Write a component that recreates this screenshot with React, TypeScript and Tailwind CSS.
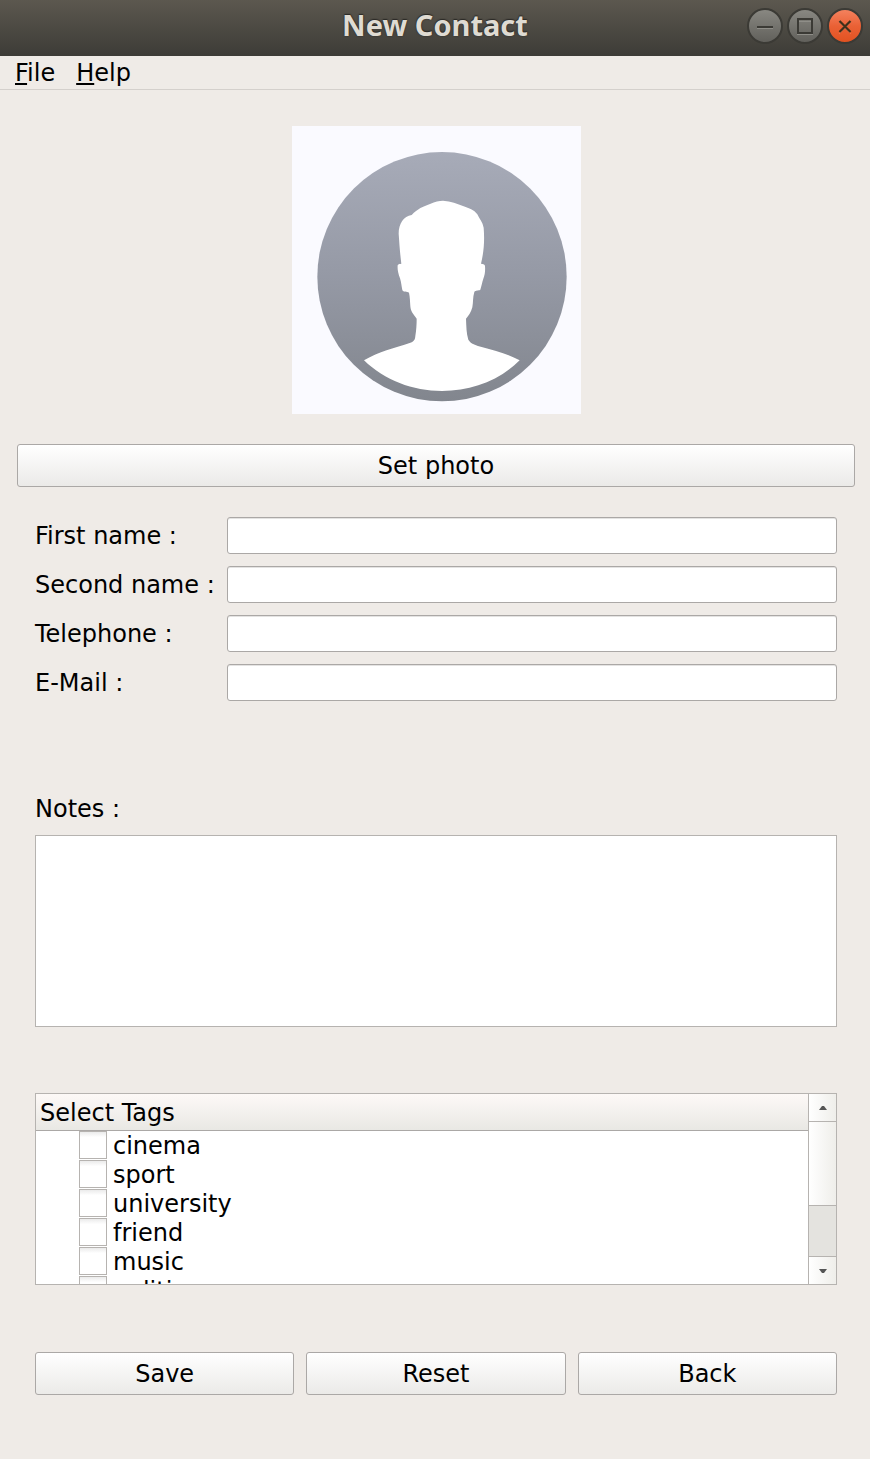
import type { ReactNode } from 'react';

const fields = [
  { id: 'first-name', label: 'First name :', type: 'text' },
  { id: 'second-name', label: 'Second name :', type: 'text' },
  { id: 'telephone', label: 'Telephone :', type: 'tel' },
  { id: 'email', label: 'E-Mail :', type: 'email' },
];

const tags = ['cinema', 'sport', 'university', 'friend', 'music', 'politics'];

function PushButton({ children }: { children: ReactNode }) {
  return (
    <button
      type="button"
      className="h-[43px] w-full rounded-[3px] border border-[#aba8a6] bg-linear-to-b from-white to-[#ebeae8] text-center"
    >
      {children}
    </button>
  );
}

function WindowButton({ label, close, children }: { label: string; close?: boolean; children: ReactNode }) {
  return (
    <button
      type="button"
      aria-label={label}
      className={
        close
          ? 'size-9 rounded-full border-2 border-[#3b3a35] bg-linear-to-b from-[#f58562] via-[#ea6135] to-[#e0501d] bg-origin-border'
          : 'size-9 rounded-full border-2 border-[#3b3a35] bg-linear-to-b from-[#8b8a84] to-[#5f5e59] bg-origin-border'
      }
    >
      <svg viewBox="0 0 32 32" className="size-8" fill="none" strokeWidth="2">
        {children}
      </svg>
    </button>
  );
}

function TitleBar() {
  return (
    <header className="grid h-14 grid-cols-[1fr_auto_1fr] items-center bg-linear-to-b from-[#5c584f] to-[#3d3c37] px-[7px] pb-1">
      <span />
      <h1 className="pb-[2px] font-['Noto_Sans',sans-serif] text-[29px] leading-8 font-bold text-[#dfdbd2] [text-shadow:0_0_2px_#2b2a27,0_-1px_1px_#2b2a27]">
        New Contact
      </h1>
      <div className="flex justify-end gap-1">
        <WindowButton label="Minimize">
          <path d="M8 18.5h16" stroke="#8f8e88" strokeWidth="1" />
          <path d="M8 17h16" stroke="#3b3a35" />
        </WindowButton>
        <WindowButton label="Maximize">
          <path d="M8 24.5h16M10 11.5h12" stroke="#8f8e88" strokeWidth="1" />
          <path d="M9 9h14v14H9z" stroke="#3b3a35" />
        </WindowButton>
        <WindowButton label="Close" close>
          <path d="M10.500 12.500l11 11M21.500 12.500l-11 11" stroke="#f58a66" strokeWidth="1" />
          <path d="M10.500 11l11 11M21.500 11l-11 11" stroke="#40301a" strokeWidth="2.300" />
        </WindowButton>
      </div>
    </header>
  );
}

function Avatar() {
  return (
    <svg viewBox="33 33 867 864" className="h-[288px] w-[289px]" role="img" aria-label="Contact photo">
      <defs>
        <linearGradient id="disc" x1="0" y1="0" x2="0" y2="1">
          <stop offset="0" stopColor="#a7abb8" />
          <stop offset="0.5" stopColor="#9599a5" />
          <stop offset="1" stopColor="#82868e" />
        </linearGradient>
      </defs>
      <rect x="33" y="33" width="867" height="864" fill="#fafaff" />
      <circle cx="483" cy="485" r="374" fill="url(#disc)" />
      <path
        fill="#fff"
        d="M249 736C296 709 337 700 386 684C398 680 402 676 403 663C406 645 407 628 407 611C397 597 389 590 388 574C387 560 387 547 384 533C379 529 366 532 364 525C361 512 361 502 357 490C351 474 349 463 350 451C352 446 357 447 361 446C357 416 355 384 353 356C353 326 368 304 392 300C410 281 426 275 447 267C463 260 474 257 486 257C510 259 529 266 548 274C564 280 579 284 589 298C595 311 605 322 608 338C611 375 609 409 600 446C606 447 610 446 612 452C613 468 612 479 607 491C603 502 602 512 598 524C592 528 584 524 580 531C575 547 577 561 574 577C570 593 563 601 555 611C556 633 556 655 562 674C570 688 588 691 602 696C642 707 678 716 716 736C655 797 572 828 483 828C395 828 311 796 249 736Z"
      />
    </svg>
  );
}

function ScrollBar() {
  return (
    <div className="flex w-7 shrink-0 flex-col border-l border-[#b6b3b0]">
      <button
        type="button"
        aria-label="Scroll up"
        className="flex h-7 items-center justify-center border-b border-[#b6b3b0] bg-linear-to-r from-white to-[#efeeea]"
      >
        <svg viewBox="0 0 8 4" className="h-1 w-2" fill="#555">
          <path d="M0 4L3 0h2l3 4z" />
        </svg>
      </button>
      <div className="flex grow flex-col bg-[#e4e3df]">
        <div className="h-[84px] border-b border-[#b6b3b0] bg-linear-to-r from-white to-[#efeeea]" />
      </div>
      <button
        type="button"
        aria-label="Scroll down"
        className="flex h-7 items-center justify-center border-t border-[#b6b3b0] bg-linear-to-r from-white to-[#efeeea]"
      >
        <svg viewBox="0 0 8 4" className="h-1 w-2" fill="#555">
          <path d="M0 0L3 4h2l3-4z" />
        </svg>
      </button>
    </div>
  );
}

function TagTree() {
  return (
    <div className="mt-[66px] flex h-48 border border-[#b6b3b0] bg-white">
      <div className="flex min-w-0 grow flex-col">
        <h2 className="h-[37px] shrink-0 border-b border-[#aba8a6] bg-linear-to-b from-[#fdf9f7] to-[#e9e8e4] pl-1 leading-[38px]">
          Select Tags
        </h2>
        <ul className="grow overflow-y-auto [scrollbar-width:none]">
          {tags.map((tag) => (
            <li key={tag} className="h-[29px] pl-[43px]">
              <label className="flex h-[29px] gap-[6px] leading-[31px]">
                <input
                  type="checkbox"
                  className="size-7 appearance-none border border-[#b6b3b0] bg-white bg-linear-to-b from-[#ebebeb] to-white to-20% checked:bg-[#f07746]"
                />
                {tag}
              </label>
            </li>
          ))}
        </ul>
      </div>
      <ScrollBar />
    </div>
  );
}

export default function App() {
  return (
    <div className="flex min-h-screen flex-col bg-[#efebe7] font-['DejaVu_Sans',sans-serif] text-2xl leading-7 text-black">
      <TitleBar />
      <nav className="flex h-[34px] gap-[21px] border-b border-[#d4d0cc] px-[15px] leading-[35px]">
        <button type="button">
          <span className="underline decoration-2 underline-offset-2">F</span>ile
        </button>
        <button type="button">
          <span className="underline decoration-2 underline-offset-2">H</span>elp
        </button>
      </nav>
      <main className="flex flex-col pt-9 pr-[15px] pb-16 pl-[17px]">
        <div className="flex justify-center">
          <Avatar />
        </div>
        <div className="mt-[30px]">
          <PushButton>Set photo</PushButton>
        </div>
        <form className="flex flex-col px-[18px] pt-[30px]">
          <div className="grid grid-cols-[auto_1fr] items-center gap-x-3 gap-y-3">
            {fields.map((field) => (
              <div key={field.id} className="contents">
                <label htmlFor={field.id} className="whitespace-nowrap">
                  {field.label}
                </label>
                <input
                  id={field.id}
                  type={field.type}
                  className="h-[37px] w-full min-w-0 rounded-[3px] border border-[#aba8a6] bg-white px-2 shadow-[inset_0_1px_0_#e4e3e2]"
                />
              </div>
            ))}
          </div>
          <label htmlFor="notes" className="mt-[94px]">
            Notes :
          </label>
          <textarea
            id="notes"
            className="mt-3 h-48 w-full resize-none border border-[#b6b3b0] bg-white p-2"
          />
          <TagTree />
          <div className="mt-[67px] grid grid-cols-3 gap-3">
            <PushButton>Save</PushButton>
            <PushButton>Reset</PushButton>
            <PushButton>Back</PushButton>
          </div>
        </form>
      </main>
    </div>
  );
}
